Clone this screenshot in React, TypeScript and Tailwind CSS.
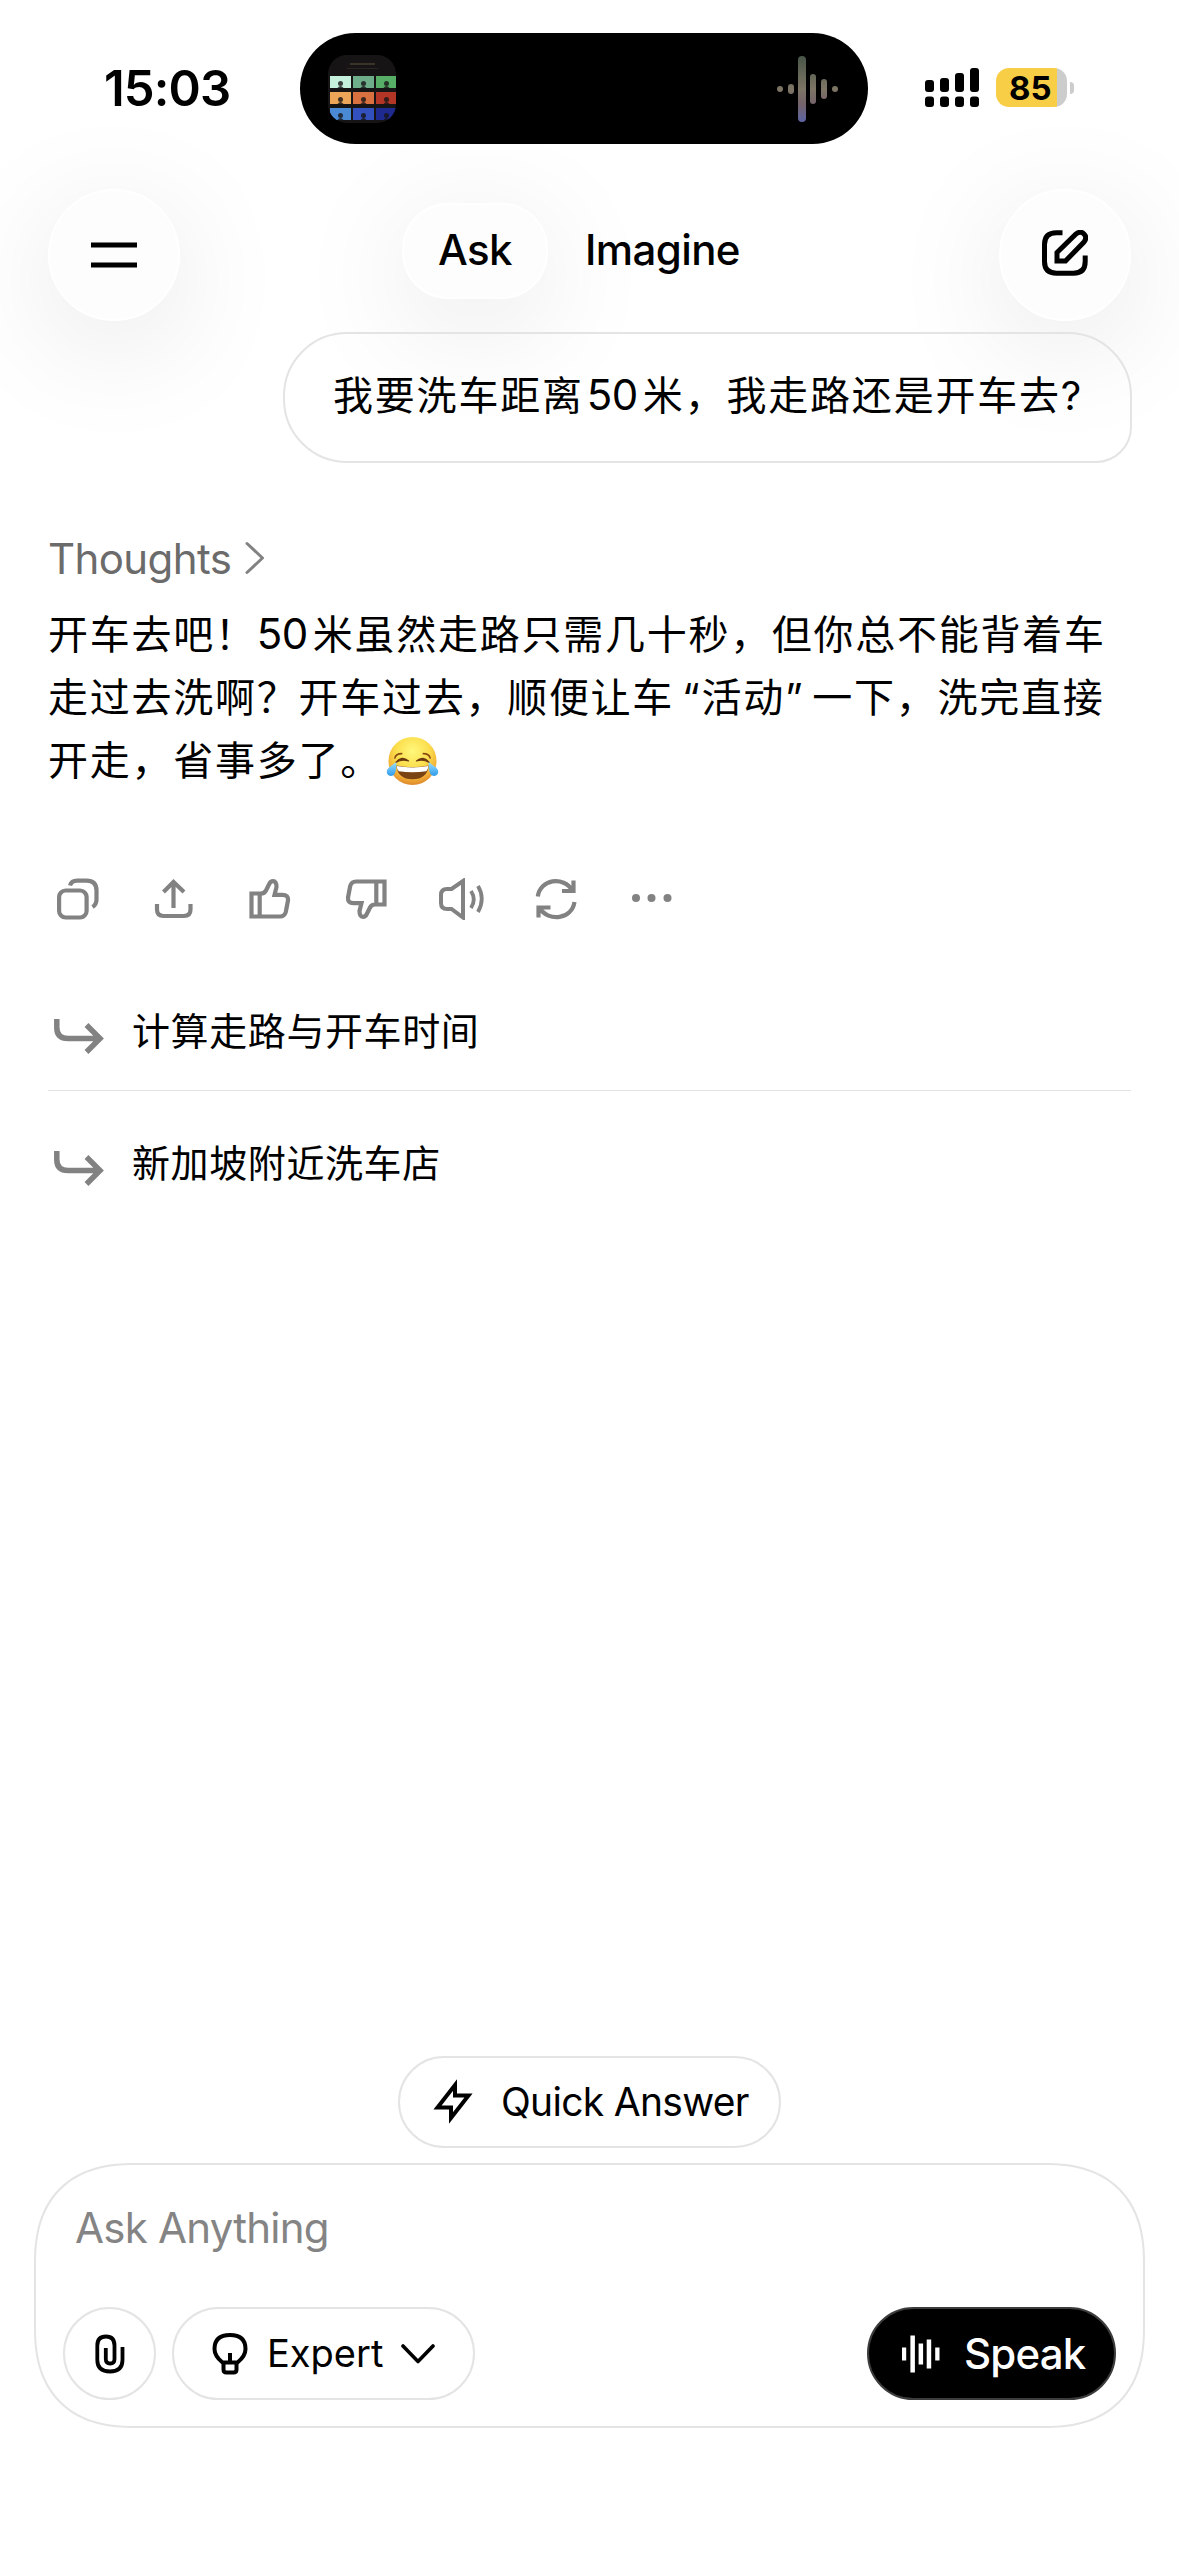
import React from "react";

const SWATCHES = [
  ["#c5f0dc", "#6fae8b", "#57ae66"],
  ["#eda657", "#d8703f", "#b23525"],
  ["#4a8ad4", "#3350bf", "#1e2a90"],
];

const StatusBar = () => {
  return (
    <div className="flex items-start h-[189px] pt-[33px]">
      <div className="w-[300px] pl-[104px] pt-[27px] text-[49px] leading-[58px] font-semibold tracking-[-0.9px]">
        15:03
      </div>
      <div className="flex justify-between items-center w-[568px] h-[111px] rounded-full bg-black pl-[28px] pr-[29px]">
        <NowPlaying />
        <svg width="62" height="68" viewBox="0 0 62 68" fill="url(#wave)">
          <defs>
            <linearGradient id="wave" x1="0" y1="0" x2="0" y2="68" gradientUnits="userSpaceOnUse">
              <stop offset="0" stopColor="#465446" />
              <stop offset="0.5" stopColor="#7d7565" />
              <stop offset="0.72" stopColor="#75636a" />
              <stop offset="1" stopColor="#5c65a8" />
            </linearGradient>
          </defs>
          <rect x="0" y="31" width="6" height="6" rx="3" />
          <rect x="11" y="29" width="6" height="10" rx="3" />
          <rect x="21" y="1" width="8" height="66" rx="4" />
          <rect x="33" y="19" width="6" height="30" rx="3" />
          <rect x="44" y="24" width="6" height="20" rx="3" />
          <rect x="55" y="31" width="6" height="6" rx="3" />
        </svg>
      </div>
      <svg className="ml-[57px] mt-[35px]" width="54" height="39" viewBox="0 0 54 39">
        <rect x="0" y="12" width="9" height="12" rx="3" />
        <rect x="15" y="10" width="9" height="14" rx="3" />
        <rect x="30" y="5" width="9" height="19" rx="3" />
        <rect x="45" y="0" width="9" height="24" rx="3" />
        <rect x="0" y="28.500" width="9" height="10.500" rx="3" />
        <rect x="15" y="28.500" width="9" height="10.500" rx="3" />
        <rect x="30" y="28.500" width="9" height="10.500" rx="3" />
        <rect x="45" y="28.500" width="9" height="10.500" rx="3" />
      </svg>
      <div className="flex items-center gap-[3px] ml-[17px] mt-[35px]">
        <div className="flex items-center w-[71px] h-[39px] rounded-[13px] bg-[linear-gradient(90deg,#f7ce46_61px,#cccccc_61px)] pl-[13px] pt-px text-[33px] leading-none font-bold">
          85
        </div>
        <div className="w-[4px] h-[12px] rounded-r-full bg-[#cccccc]" />
      </div>
    </div>
  );
};

const NowPlaying = () => {
  return (
    <div className="w-[68px] h-[68px] rounded-[19px] bg-[#171415] overflow-hidden">
      <div className="flex flex-col items-center gap-[3px] h-[21px] pt-[8px]">
        <div className="w-[25px] h-[2px] bg-[#3a3428]" />
        <div className="w-[31px] h-[1px] bg-[#2a2523]" />
      </div>
      <div className="flex flex-col gap-[4px] pl-[2px]">
        {SWATCHES.map((row, i) => (
          <div key={i} className="flex gap-[2px]">
            {row.map((color) => (
              <svg key={color} className="shrink-0" width="21" height="12" viewBox="0 0 21 12">
                <rect width="21" height="12" fill={color} />
                <circle cx="10.500" cy="7.500" r="2.500" fill="#171415" opacity="0.8" />
                <path d="M7.500 12q3-4 6 0z" fill="#171415" opacity="0.8" />
              </svg>
            ))}
          </div>
        ))}
      </div>
    </div>
  );
};

const Header = () => {
  return (
    <div className="flex justify-between items-start h-[143px] px-[48px]">
      <button className="flex items-center justify-center w-[132px] h-[132px] rounded-full border-2 border-white bg-[#fdfdfd] shadow-[0_24px_120px_rgba(0,0,0,0.10)]">
        <svg width="46" height="26" viewBox="0 0 46 26">
          <rect y="0.500" width="46" height="5" />
          <rect y="20.500" width="46" height="5" />
        </svg>
      </button>
      <div className="flex items-center h-[96px] mt-[14px] text-[42px] font-medium">
        <button className="w-[146px] h-[96px] pb-[3px] rounded-[46px] border-2 border-white bg-[#fdfdfd] shadow-[0_24px_120px_rgba(0,0,0,0.10)] tracking-[-0.6px]">
          Ask
        </button>
        <button className="w-[229px] pl-[37px] pb-[3px] text-left tracking-[-0.6px]">Imagine</button>
      </div>
      <button className="flex items-center justify-center w-[132px] h-[132px] rounded-full border-2 border-white bg-[#fdfdfd] shadow-[0_24px_120px_rgba(0,0,0,0.10)]">
        <svg className="-mt-[4px]" width="46" height="46" viewBox="0 0 46 46" fill="none" stroke="#000" strokeWidth="5">
          <path d="M20.500 2.800H14.500Q2.500 2.800 2.500 14.500V31.500Q2.500 43.200 14.500 43.200H31.500Q43.200 43.200 43.200 31.500V25.500" />
          <path d="M15 31V22.500L34 4Q38.500 0.500 42 4Q45.500 7.500 42 12L23.500 31Z" />
        </svg>
      </button>
    </div>
  );
};

const Emoji = () => {
  return (
    <svg className="ml-[4px]" width="53" height="50" viewBox="0 0 54 50" role="img" aria-label="😂">
      <defs>
        <radialGradient id="face" cx="0.5" cy="0.3" r="0.72">
          <stop offset="0" stopColor="#fff87c" />
          <stop offset="0.5" stopColor="#fbdd4b" />
          <stop offset="0.8" stopColor="#f2ac35" />
          <stop offset="1" stopColor="#d9822b" />
        </radialGradient>
        <linearGradient id="tear" x1="0" y1="0" x2="0" y2="1">
          <stop offset="0" stopColor="#9be0ff" />
          <stop offset="1" stopColor="#2f9bea" />
        </linearGradient>
      </defs>
      <circle cx="27" cy="25" r="24.500" fill="url(#face)" />
      <path d="M9 22Q10 17.500 16 17.500" fill="none" stroke="#8a4b12" strokeWidth="1.600" strokeLinecap="round" />
      <path d="M38 17.500Q44 17.500 45 22" fill="none" stroke="#8a4b12" strokeWidth="1.600" strokeLinecap="round" />
      <path d="M10 26.500Q16 19 23 25Q16 22.500 10 26.500Z" fill="#6b3a10" stroke="#6b3a10" strokeWidth="1.200" strokeLinejoin="round" />
      <path d="M44 26.500Q38 19 31 25Q38 22.500 44 26.500Z" fill="#6b3a10" stroke="#6b3a10" strokeWidth="1.200" strokeLinejoin="round" />
      <path d="M10.500 29.500Q27 33 43.500 29.500Q42 43.500 27 43.500Q12 43.500 10.500 29.500Z" fill="#7a4313" />
      <path d="M11 30Q27 33 43 30Q43 34 41 35.500Q27 37.500 13 35.500Q11 34 11 30Z" fill="#fff" />
      <path d="M10.500 26Q11 37 7.500 39.500Q4 41.500 1.500 38.500Q-0.500 35 3 31.500Q7 29 10.500 26Z" fill="url(#tear)" />
      <path d="M43.500 26Q43 37 46.500 39.500Q50 41.500 52.500 38.500Q54.500 35 51 31.500Q47 29 43.500 26Z" fill="url(#tear)" />
    </svg>
  );
};

const ThumbIcon = ({ className = "" }: { className?: string }) => (
  <svg className={className} width="42" height="42" viewBox="0 0 42 42">
    <path d="M12 15.500H2.500V38.500H31Q35.500 38.500 36.800 34L39 22.500Q39.500 16.800 33.500 16.800H25.500L27.500 9Q27.500 3.200 24 3.200Q21.500 3.200 20.200 6L17 12.500Q15.500 15.500 12 15.500ZM10.700 15.500V38.500" />
  </svg>
);

const Actions = () => {
  return (
    <div className="flex items-center gap-[54px] h-[42px] mt-[86px] pl-[9px] fill-none stroke-[#828282] stroke-[4.2]">
      <svg width="42" height="42" viewBox="0 0 42 42">
        <rect x="2.100" y="12.500" width="27.500" height="27" rx="6.500" />
        <path d="M13 7.500Q14.500 2.600 20 2.600H29.500Q39.500 2.600 39.500 12.500V21.500Q39.500 26.500 35.500 29" />
      </svg>
      <svg width="42" height="42" viewBox="0 0 42 42">
        <path d="M20.500 30V4M10.500 14L20.500 4L31 14M4 26V31.500Q4 38 10.500 38H31Q37.500 38 37.500 31.500V26" />
      </svg>
      <ThumbIcon />
      <ThumbIcon className="rotate-180" />
      <svg className="-ml-[3px] -mr-[4px]" width="47" height="42" viewBox="0 0 47 42">
        <path d="M25 3V39.500L13.500 31H9Q3 31 3 25V17Q3 11 9 11H13.500Z" strokeWidth="4" />
        <path d="M33 13Q38.500 21.500 33 30M40 8Q47.500 20.500 40 34" strokeWidth="3.800" />
      </svg>
      <svg width="42" height="42" viewBox="0 0 42 42">
        <path d="M2.800 18.500C5 1.500 28 -3 38 13M38.500 2.500V13H27M39.500 24C37 41 14 45 4 29.500M3.500 39.500V29.500H15.500" />
      </svg>
      <svg width="42" height="42" viewBox="0 0 42 42" className="fill-[#828282] stroke-none">
        <circle cx="5" cy="20" r="4" />
        <circle cx="20.500" cy="20" r="4" />
        <circle cx="36.500" cy="20" r="4" />
      </svg>
    </div>
  );
};

const FollowUp = ({ text }: { text: string }) => {
  return (
    <div className="flex items-center h-[131px] pl-[6px] pt-[13px]">
      <svg className="mt-[9px]" width="50" height="36" viewBox="0 0 50 36" fill="none" stroke="#828282" strokeWidth="5.500">
        <path d="M2.800 1V9.500Q2.800 20.500 14 20.500H45M32.500 7L46 20.500L32.500 34" />
      </svg>
      <span className="ml-[28px] text-[38px] tracking-[0.6px] whitespace-nowrap">{text}</span>
    </div>
  );
};

const Composer = () => {
  return (
    <div className="flex flex-col justify-between h-[265px] mx-[34px] mt-[15px] pt-[33px] pb-[26px] pl-[27px] pr-[27px] border-2 border-[#e4e4e4] rounded-[100px] [corner-shape:superellipse(1.25)]">
      <div className="pl-[12px] text-[42px] leading-[60px] tracking-[-0.75px] text-[#848484]">Ask Anything</div>
      <div className="flex items-center">
        <button className="flex items-center justify-center w-[93px] h-[93px] rounded-full border-2 border-[#e4e4e4]">
          <svg width="30" height="40" viewBox="0 0 30 40" fill="none" stroke="#000" strokeWidth="3.800">
            <path d="M27.500 13V26Q27.500 37.500 15 37.500Q2.300 37.500 2.300 26V11.500Q2.300 2.500 11 2.500Q19.500 2.500 19.500 11.500V25Q19.500 29.500 15.200 29.500Q10.800 29.500 10.800 25V14" />
          </svg>
        </button>
        <button className="flex items-center w-[303px] h-[93px] ml-[16px] pl-[38px] rounded-full border-2 border-[#e4e4e4] text-[38px]">
          <svg width="36" height="44" viewBox="0 0 36 44" fill="none" stroke="#000" strokeWidth="4">
            <path d="M10.500 30.500Q2.500 24 2.500 17Q2.500 3 18 3Q33.500 3 33.500 17Q33.500 24 25.500 30.500ZM18 30V21M11.500 30V37.500Q11.500 40.500 14.500 40.500H21.500Q24.500 40.500 24.500 37.500V30" />
          </svg>
          <span className="ml-[19px]">Expert</span>
          <svg className="ml-[18px]" width="34" height="22" viewBox="0 0 34 22" fill="none" stroke="#000" strokeWidth="3.600" strokeLinecap="round" strokeLinejoin="round">
            <path d="M2 3L17 18.500L32 3" />
          </svg>
        </button>
        <button className="flex items-center w-[249px] h-[93px] ml-auto pl-[33px] rounded-full border-2 border-[#3c3c3c] bg-black text-white text-[42px] font-medium">
          <svg width="38" height="38" viewBox="0 0 38 38" fill="#fff">
            <rect x="0" y="12.500" width="4.200" height="13" />
            <rect x="8.400" y="0.500" width="4.500" height="37" />
            <rect x="16.600" y="8.500" width="4.500" height="21" />
            <rect x="24.700" y="4.500" width="4.500" height="29" />
            <rect x="33.200" y="12.500" width="4.300" height="13" />
          </svg>
          <span className="ml-[24px] tracking-[-0.8px]">Speak</span>
        </button>
      </div>
    </div>
  );
};

export default function App() {
  return (
    <div className="flex flex-col w-[1179px] h-[2556px] overflow-hidden bg-white text-black font-[Inter,'Noto_Sans_CJK_SC',sans-serif]">
      <StatusBar />
      <Header />
      <div className="flex items-center self-end h-[131px] w-[849px] mr-[47px] pl-[48px] pb-[7px] border-2 border-[#e4e4e4] rounded-[64px] rounded-br-[36px]">
        <p className="text-[40px] tracking-[1.8px] whitespace-nowrap">
          我要洗车距离<span className="ml-[3px] mr-[5px] text-[42px] tracking-[-0.5px]">50</span>米，我走路还是开车去?
        </p>
      </div>
      <div className="flex flex-col px-[48px] pt-[65px]">
        <div className="flex items-center h-[60px] text-[42px] tracking-[-0.6px] text-[#6b6b6b]">
          <span>Thoughts</span>
          <svg className="ml-[14px]" width="20" height="34" viewBox="0 0 20 34" fill="none" stroke="#828282" strokeWidth="3" strokeLinecap="round" strokeLinejoin="round">
            <path d="M2 2.500L17.500 17L2 31.500" />
          </svg>
        </div>
        <div className="mt-[14px] text-[40px] leading-[63px] tracking-[1.74px] whitespace-nowrap">
          <p>
            开车去吧！<span className="mr-[5px] text-[42px] tracking-[-0.5px]">50</span>米虽然走路只需几十秒，但你总不能背着车
          </p>
          <p className="[word-spacing:-5px]">走过去洗啊？开车过去，顺便让车 “活动” 一下，洗完直接</p>
          <p className="flex items-center">
            开走，省事多了。
            <Emoji />
          </p>
        </div>
        <Actions />
        <div className="mt-[39px]">
          <FollowUp text="计算走路与开车时间" />
          <div className="h-px bg-[#e3e3e3]" />
          <FollowUp text="新加坡附近洗车店" />
        </div>
      </div>
      <div className="mt-auto mb-[128px]">
        <button className="flex items-center w-[383px] h-[92px] mx-auto pl-[33px] rounded-full border-2 border-[#e4e4e4] text-[39px]">
          <svg width="40" height="48" viewBox="0 0 40 48" fill="none" stroke="#000" strokeWidth="4">
            <path d="M22 7V17.500H35.500L18 40V29.500H4.500Z" />
          </svg>
          <span className="ml-[28px] tracking-[-0.7px]">Quick Answer</span>
        </button>
        <Composer />
      </div>
    </div>
  );
}
